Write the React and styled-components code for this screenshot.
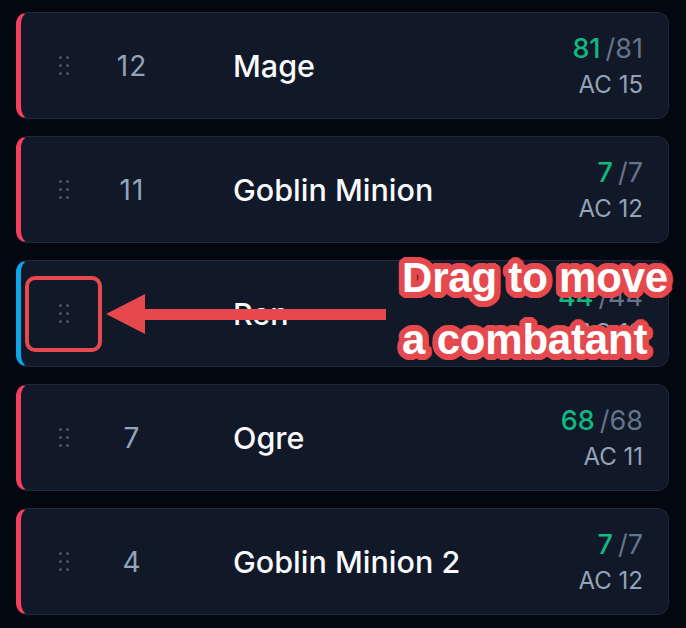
import React from "react";
import styled, { createGlobalStyle } from "styled-components";

const GlobalStyle = createGlobalStyle`
  html, body {
    margin: 0;
    padding: 0;
    background: #030712;
  }
  body {
    font-family: Inter, "Noto Sans", "Liberation Sans", sans-serif;
    -webkit-font-smoothing: antialiased;
  }
`;

const Page = styled.div`
  position: relative;
  width: 686px;
  height: 628px;
  box-sizing: border-box;
  padding: 12px 17px 0 16px;
  background: #030712;
  overflow: hidden;
`;

const List = styled.div`
  display: flex;
  flex-direction: column;
  gap: 17px;
`;

const Card = styled.div`
  position: relative;
  display: grid;
  grid-template-columns: 48px 88px 1fr auto;
  align-items: center;
  height: 107px;
  box-sizing: border-box;
  padding: 0 25px 0 19px;
  background: #111827;
  border: 1px solid #1f2937;
  border-left: 5px solid ${(p) => (p.$side === "player" ? "#0ea5e9" : "#f43f5e")};
  border-radius: 12px;
`;

const Handle = styled.div`
  position: relative;
  display: grid;
  grid-template-columns: repeat(2, 3px);
  grid-auto-rows: 3px;
  column-gap: 4px;
  row-gap: 5px;
  justify-content: center;
  align-content: center;
  height: 100%;

  span {
    width: 3px;
    height: 3px;
    border-radius: 50%;
    background: #4b5563;
  }
`;

const Highlight = styled.div`
  position: absolute;
  left: -15px;
  top: 15px;
  width: 77px;
  height: 76px;
  box-sizing: border-box;
  border: 4px solid #e5484d;
  border-radius: 10px;
`;

const Initiative = styled.div`
  text-align: center;
  font-size: 28px;
  color: #94a3b8;
  letter-spacing: 1px;
`;

const Name = styled.div`
  padding-left: 57px;
  font-size: 30.5px;
  font-weight: 500;
  color: #f8fafc;
  white-space: nowrap;
`;

const Stats = styled.div`
  display: flex;
  flex-direction: column;
  align-items: flex-end;
  gap: 8px;
`;

const Hp = styled.div`
  font-size: 27px;
  line-height: 30px;
  color: #64748b;

  b {
    font-weight: 500;
    color: #10b981;
    margin-right: 5px;
  }
`;

const Ac = styled.div`
  font-size: 24px;
  line-height: 26px;
  color: #94a3b8;
`;

const Arrow = styled.svg`
  position: absolute;
  left: 0;
  top: 0;
  pointer-events: none;
`;

const Callout = styled.div`
  position: absolute;
  left: 402px;
  top: 247px;
  font-family: "Liberation Sans", Arial, sans-serif;
  font-weight: 700;
  font-size: 42px;
  line-height: 62px;
  letter-spacing: -0.2px;
  color: #ffffff;
  white-space: nowrap;
  text-shadow: ${() => {
    const out = [];
    [6, 4, 2].forEach((r) => {
      for (let i = 0; i < 24; i++) {
        const a = (i / 24) * Math.PI * 2;
        out.push(`${(Math.cos(a) * r).toFixed(2)}px ${(Math.sin(a) * r).toFixed(2)}px 0 #e5484d`);
      }
    });
    return out.join(", ");
  }};
`;

const combatants = [
  { init: 12, name: "Mage", hp: 81, max: 81, ac: 15, side: "enemy" },
  { init: 11, name: "Goblin Minion", hp: 7, max: 7, ac: 12, side: "enemy" },
  { init: 9, name: "Ren", hp: 44, max: 44, ac: 13, side: "player", focus: true },
  { init: 7, name: "Ogre", hp: 68, max: 68, ac: 11, side: "enemy" },
  { init: 4, name: "Goblin Minion 2", hp: 7, max: 7, ac: 12, side: "enemy" },
];

const App = () => {
  return (
    <Page>
      <GlobalStyle />
      <List>
        {combatants.map((c) => (
          <Card key={c.name} $side={c.side}>
            <Handle>
              {[0, 1, 2, 3, 4, 5].map((i) => (
                <span key={i} />
              ))}
              {c.focus && <Highlight />}
            </Handle>
            <Initiative>{c.init}</Initiative>
            <Name>{c.name}</Name>
            <Stats>
              <Hp>
                <b>{c.hp}</b>/{c.max}
              </Hp>
              <Ac>AC {c.ac}</Ac>
            </Stats>
          </Card>
        ))}
      </List>

      <Arrow width="686" height="628" viewBox="0 0 686 628">
        <rect x="140" y="309" width="246" height="11" fill="#e5484d" />
        <polygon points="106,314 145,294 145,334" fill="#e5484d" />
      </Arrow>

      <Callout>
        Drag to move
        <br />
        a combatant
      </Callout>
    </Page>
  );
};

export default App;
